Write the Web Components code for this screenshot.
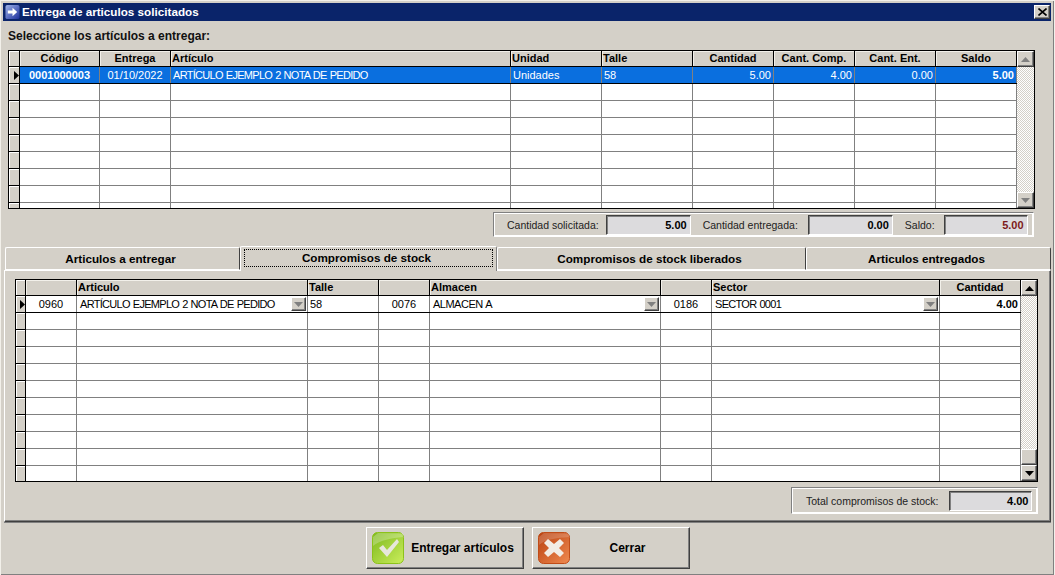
<!DOCTYPE html>
<html>
<head>
<meta charset="utf-8">
<style>
  html, body { margin: 0; padding: 0; background: #d4d0c8; overflow: hidden; }
  body { font: 11px "Liberation Sans", Arial, sans-serif; color: #000; }
</style>
</head>
<body>
<app-window caption="Entrega de articulos solicitados"></app-window>
<script>
const BEVEL = 'border: 1px solid; border-color: #fff #404040 #404040 #fff; box-shadow: inset -1px -1px 0 #808080;';
const UP = '<svg width="9" height="5" viewBox="0 0 9 5"><path d="M4.5 0 9 5H0z" fill="currentColor"/></svg>';
const DOWN = '<svg width="9" height="5" viewBox="0 0 9 5"><path d="M0 0h9L4.5 5z" fill="currentColor"/></svg>';

class TitleBar extends HTMLElement {
  constructor() {
    super();
    this.attachShadow({ mode: 'open' }).innerHTML = `
      <style>
        :host { display: flex; align-items: center; height: 18px; background: #0a246a; color: #fff; padding: 0 1px 0 2px; font: bold 11.7px "Liberation Sans", Arial, sans-serif; }
        svg.ico { margin-right: 2px; flex: none; }
        span { flex: 1; padding-bottom: 2px; }
        button { width: 16px; height: 14px; padding: 0; background: #d4d0c8; ${BEVEL} display: flex; align-items: center; justify-content: center; }
      </style>
      <svg class="ico" width="15" height="16" viewBox="0 0 16 16">
        <defs><linearGradient id="g" x1="0" y1="0" x2="1" y2="1"><stop offset="0" stop-color="#9fb4ea"/><stop offset="1" stop-color="#1c2f9c"/></linearGradient></defs>
        <rect x="0.5" y="0.5" width="15" height="15" rx="2" fill="url(#g)"/>
        <path d="M3 6.5h5V3.5L13 8l-5 4.5v-3H3z" fill="#fff"/>
      </svg>
      <span><slot></slot></span>
      <button><svg width="9" height="8" viewBox="0 0 9 8"><path d="M0.5 0.5 8.5 7.5M8.5 0.5 0.5 7.5" stroke="#000" stroke-width="1.6"/></svg></button>`;
  }
}
customElements.define('title-bar', TitleBar);

class DataGrid extends HTMLElement {
  constructor() {
    super();
    this.attachShadow({ mode: 'open' });
  }
  connectedCallback() {
    const cols = JSON.parse(this.getAttribute('cols'));
    const heads = JSON.parse(this.getAttribute('heads'));
    const row = JSON.parse(this.getAttribute('row'));
    const count = +this.getAttribute('count');
    const selected = this.hasAttribute('selected');
    const sbw = this.getAttribute('sb');
    const tpl = cols.map(w => w + 'px').join(' ');
    const head = heads.map(h => `<div class="hc ${h[1] || ''}">${h[0]}</div>`).join('');
    const cells = row.map(c => `<div class="c ${c[1] || ''}"><span ${c[2] ? `style="letter-spacing:${c[2]}px;word-spacing:0.6px"` : ''}>${c[0]}</span>${(c[1] || '').includes('drop') ? `<i>${DOWN}</i>` : ''}</div>`).join('');
    const blank = cols.slice(1).map(() => '<div class="c"></div>').join('');
    let rows = `<div class="r first ${selected ? 'sel' : ''}"><div class="ind cur"><svg width="5" height="9" viewBox="0 0 5 9"><path d="M0 0 5 4.5 0 9z"/></svg></div>${cells}</div>`;
    for (let i = 1; i < count; i++) rows += `<div class="r"><div class="ind"></div>${blank}</div>`;
    this.shadowRoot.innerHTML = `
      <style>
        :host { display: flex; box-sizing: border-box; border: 1px solid #000; background: #fff; overflow: hidden; font: 11px "Liberation Sans", Arial, sans-serif; }
        .body { flex: none; overflow: hidden; }
        .r { display: grid; grid-template-columns: ${tpl}; height: 17px; box-sizing: border-box; border-bottom: 1px solid #808080; }
        .r.head { height: 16px; background: #d4d0c8; border-bottom: 1px solid #000; font-weight: bold; }
        .r.first { border-bottom-color: #000; }
        .hc { border-right: 1px solid #000; line-height: 15px; text-align: center; box-shadow: inset 1px 1px 0 #f2f0ea; white-space: nowrap; }
        .hc.l { text-align: left; padding-left: 1px; }
        .c { border-right: 1px solid #808080; line-height: 16px; padding: 0 2px; white-space: nowrap; overflow: hidden; position: relative; }
        .c.ctr { text-align: center; }
        .c.num { text-align: right; }
        .c.b { font-weight: bold; }
        .c.drop { padding-left: 3px; }
        .c i { position: absolute; right: 1px; top: 1px; width: 15px; height: 14px; box-sizing: border-box; background: #d4d0c8; ${BEVEL} color: #808080; display: flex; align-items: center; justify-content: center; }
        .ind { background: #d4d0c8; border-right: 1px solid #000; box-shadow: inset 1px 1px 0 #fff; display: flex; align-items: center; justify-content: flex-end; }
        .r:not(.head) .ind { border-bottom: 1px solid #000; margin-bottom: -1px; }
        .sel .c { background: #0a6fdf; color: #fff; border-right-color: #808080; }
        .sb { flex: none; width: ${sbw}px; display: flex; flex-direction: column; background: repeating-conic-gradient(#fff 0 25%, #d4d0c8 0 50%) 0 0 / 2px 2px; box-sizing: border-box; }
        .sb b { display: flex; align-items: center; justify-content: center; flex: none; height: 16px; box-sizing: border-box; background: #d4d0c8; ${BEVEL} color: ${this.hasAttribute('sbactive') ? '#000' : '#808080'}; }
        .sb .gap { flex: 1; }
        .sb .thumb { height: 16px; }
      </style>
      <div class="body">
        <div class="r head"><div class="ind"></div>${head}</div>
        ${rows}
      </div>
      <div class="sb"><b>${UP}</b><div class="gap"></div>${this.hasAttribute('sbactive') ? '<b class="thumb"></b>' : ''}<b>${DOWN}</b></div>`;
  }
}
customElements.define('data-grid', DataGrid);

class SumField extends HTMLElement {
  constructor() {
    super();
    this.attachShadow({ mode: 'open' }).innerHTML = `
      <style>
        :host { display: flex; flex: none; align-items: center; justify-content: flex-end; box-sizing: border-box; height: 20px; background: #dcdbdd; color: #000; border: 1px solid; border-color: #404040 #fff #fff #404040; box-shadow: inset 1px 1px 0 #808080; padding-right: 3px; font: bold 11px "Liberation Sans", Arial, sans-serif; }
      </style><slot></slot>`;
  }
}
customElements.define('sum-field', SumField);

class SumPanel extends HTMLElement {
  constructor() {
    super();
    this.attachShadow({ mode: 'open' }).innerHTML = `
      <style>
        :host { display: flex; align-items: center; box-sizing: border-box; border: 1px solid; border-color: #808080 #fff #fff #808080; outline: 1px solid #fff; outline-offset: -2px; padding: 0 3px; font: 10.5px "Liberation Sans", Arial, sans-serif; color: #222; white-space: nowrap; }
      </style><slot></slot>`;
  }
}
customElements.define('sum-panel', SumPanel);

class TabStrip extends HTMLElement {
  constructor() {
    super();
    this.attachShadow({ mode: 'open' }).innerHTML = `
      <style>
        :host { display: flex; align-items: flex-end; height: 25px; padding-left: 2px; font: bold 11.7px "Liberation Sans", Arial, sans-serif; }
        ::slotted(*) { box-sizing: border-box; }
      </style><slot></slot>`;
  }
}
customElements.define('tab-strip', TabStrip);

class TabItem extends HTMLElement {
  constructor() {
    super();
    this.attachShadow({ mode: 'open' }).innerHTML = `
      <style>
        :host { display: flex; align-items: center; justify-content: center; height: 23px; border: 1px solid #fff; border-bottom: 1px solid #fff; border-right: 1px solid #404040; border-radius: 2px 2px 0 0; position: relative; }
        :host([active]) { height: 25px; border-bottom: none; border-right-color: #808080; z-index: 1; background: #d4d0c8; margin-bottom: -1px; }
        .lab { display: flex; align-items: center; justify-content: center; flex: 1; align-self: stretch; padding-right: 4px; }
        :host([active]) .lab { margin: 2px 3px 4px 3px; border: 1px dotted #000; padding-bottom: 2px; box-sizing: border-box; }
      </style><div class="lab"><slot></slot></div>`;
  }
}
customElements.define('tab-item', TabItem);

class IconButton extends HTMLElement {
  constructor() {
    super();
    const kind = this.getAttribute('kind');
    const ok = kind === 'ok';
    const icon = ok
      ? `<defs><linearGradient id="a" x1="0" y1="0" x2="1" y2="1"><stop offset="0" stop-color="#7db81e"/><stop offset="1" stop-color="#cbee5c"/></linearGradient></defs>
         <rect x="0.5" y="0.5" width="31" height="31" rx="5" fill="url(#a)" stroke="#8cc21a"/>
         <path d="M1 14C8 8 20 6 31 5V1.5L6 1 1 5z" fill="#fff" opacity=".25"/>
         <path d="M7 16l4-3 4 5L25 7l2 3-12 15z" fill="#e7e7dc"/>`
      : `<defs><linearGradient id="b" x1="0" y1="0" x2="1" y2="1"><stop offset="0" stop-color="#b8400f"/><stop offset="1" stop-color="#f08a50"/></linearGradient></defs>
         <rect x="0.5" y="0.5" width="31" height="31" rx="5" fill="url(#b)" stroke="#c04c18"/>
         <path d="M1 13C8 7 18 6 31 5V1.5L6 1 1 5z" fill="#fff" opacity=".18"/>
         <path d="M10 7l6 5 6-5 4 4-5 5 5 5-4 4-6-5-6 5-4-4 5-5-5-5z" fill="#f2ece4"/>`;
    this.attachShadow({ mode: 'open' }).innerHTML = `
      <style>
        :host { display: flex; align-items: center; box-sizing: border-box; width: 158px; height: 42px; border: 1px solid; border-color: #fff #404040 #404040 #fff; box-shadow: inset -1px -1px 0 #808080; padding-left: 5px; font: bold 12px "Liberation Sans", Arial, sans-serif; }
        svg { flex: none; }
        .t { flex: 1; text-align: center; padding-right: ${ok ? 2 : 4}px; white-space: nowrap; }
      </style>
      <svg width="32" height="32" viewBox="0 0 32 32">${icon}</svg>
      <div class="t"><slot></slot></div>`;
  }
}
customElements.define('icon-button', IconButton);

const page = document.createElement('template');
page.innerHTML = `
  <style>
    :host { display: flex; flex-direction: column; box-sizing: border-box; width: 1055px; height: 575px; background: #d4d0c8; border: 1px solid #f2f0ea; border-width: 1px 1px 0 1px; padding: 2px 3px 0 2px; box-shadow: inset -1px -1px 0 #808080; position: relative; }
    .prompt { font-weight: bold; font-size: 12px; height: 29px; line-height: 30px; padding-left: 5px; color: #111; box-sizing: border-box; }
    #top { margin-left: 5px; width: 1027px; height: 159px; flex: none; }
    .panel-row { display: flex; justify-content: flex-end; padding: 3px 17px 0 0; height: 36px; box-sizing: border-box; }
    #sum1 { width: 541px; height: 25px; }
    .page { margin: 0 0 0 1px; height: 252px; box-sizing: border-box; border: 1px solid; border-color: #fff #404040 #404040 #fff; box-shadow: inset -1px -1px 0 #808080, 0 1px 0 #808080; padding: 8px 12px 0 10px; }
    #bot { width: 1023px; height: 203px; }
    .total { display: flex; justify-content: flex-end; padding-top: 5px; }
    #sum2 { width: 247px; height: 27px; padding-left: 14px; }
    .actions { display: flex; justify-content: center; gap: 8px; padding: 5px 0 0 2px; }
  </style>
  <title-bar><slot name="caption"></slot></title-bar>
  <div class="prompt">Seleccione los artículos a entregar:</div>
  <data-grid id="top" sb="17" count="9" selected
    cols='[11,80,71,340,91,91,81,81,81,81]'
    heads='[["Código"],["Entrega"],["Artículo","l"],["Unidad","l"],["Talle","l"],["Cantidad"],["Cant. Comp."],["Cant. Ent."],["Saldo"]]'
    row='[["0001000003","ctr b"],["01/10/2022","ctr"],["ARTÍCULO EJEMPLO 2 NOTA DE PEDIDO","",-0.7],["Unidades"],["58"],["5.00","num"],["4.00","num"],["0.00","num"],["5.00","num b"]]'></data-grid>
  <div class="panel-row">
    <sum-panel id="sum1">
      <span style="margin-left:10px">Cantidad solicitada:</span><sum-field style="width:85px;margin-left:7px">5.00</sum-field>
      <span style="margin-left:12px">Cantidad entregada:</span><sum-field style="width:85px;margin-left:10px">0.00</sum-field>
      <span style="margin-left:12px">Saldo:</span><sum-field style="width:84px;margin-left:9px;color:#7d1a1a">5.00</sum-field>
    </sum-panel>
  </div>
  <tab-strip>
    <tab-item style="width:235px">Articulos a entregar</tab-item>
    <tab-item active style="width:257px">Compromisos de stock</tab-item>
    <tab-item style="width:309px">Compromisos de stock liberados</tab-item>
    <tab-item style="width:245px">Articulos entregados</tab-item>
  </tab-strip>
  <div class="page">
    <data-grid id="bot" sb="16" count="11" sbactive
      cols='[10,51,231,71,51,231,51,228,81]'
      heads='[[""],["Articulo","l"],["Talle","l"],[""],["Almacen","l"],[""],["Sector","l"],["Cantidad"]]'
      row='[["0960","ctr"],["ARTÍCULO EJEMPLO 2 NOTA DE PEDIDO","drop",-0.7],["58"],["0076","ctr"],["ALMACEN A","drop",-0.5],["0186","ctr"],["SECTOR 0001","drop",-0.7],["4.00","num b"]]'></data-grid>
    <div class="total">
      <sum-panel id="sum2">Total compromisos de stock:<sum-field style="width:83px;margin-left:11px">4.00</sum-field></sum-panel>
    </div>
  </div>
  <div class="actions">
    <icon-button kind="ok">Entregar artículos</icon-button>
    <icon-button kind="no">Cerrar</icon-button>
  </div>`;

class AppWindow extends HTMLElement {
  constructor() {
    super();
    this.attachShadow({ mode: 'open' }).appendChild(page.content.cloneNode(true));
    this.shadowRoot.querySelector('title-bar').textContent = this.getAttribute('caption');
  }
}
customElements.define('app-window', AppWindow);
</script>
</body>
</html>
